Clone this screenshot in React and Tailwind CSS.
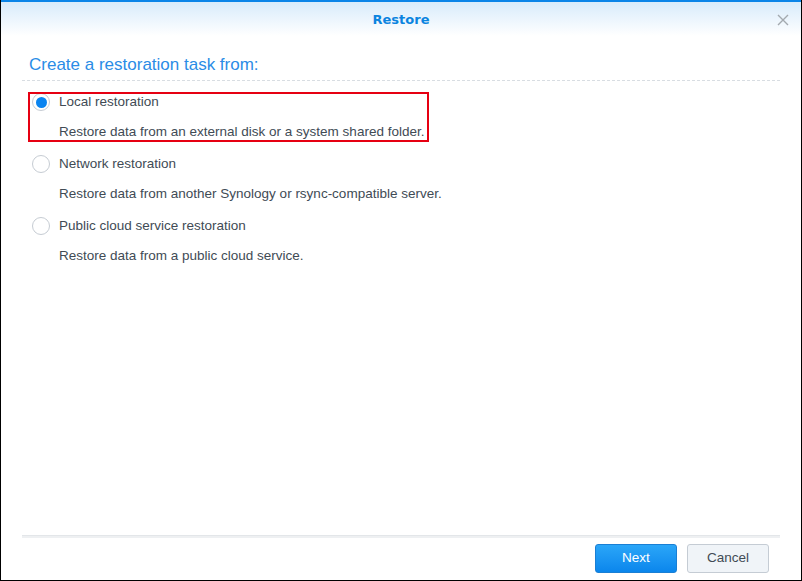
import React from "react";

function Radio({ checked }) {
  return (
    <span className="flex h-[18px] w-[18px] shrink-0 items-center justify-center rounded-full border border-[#c6ccd3] bg-white">
      {checked && <span className="h-[11px] w-[11px] rounded-full bg-[#0a84f0]" />}
    </span>
  );
}

function Option({ checked, label, desc, boxed }) {
  return (
    <div className={boxed ? "h-[50px] w-[401px] outline-2 -outline-offset-2 outline-[#e60012] outline" : "h-[50px]"}>
      <div className="flex h-[20px] items-center gap-[9px] pl-[4px]">
        <Radio checked={checked} />
        <span className="whitespace-nowrap">{label}</span>
      </div>
      <div className="mt-[10px] flex h-[20px] items-center whitespace-nowrap pl-[31px]">{desc}</div>
    </div>
  );
}

export default function App() {
  return (
    <div className="flex h-[581px] w-[802px] flex-col border-x border-b border-black bg-white text-[13.5px] text-[#414b55]" style={{ fontFamily: '"Liberation Sans", Arial, sans-serif' }}>
      <div className="h-[2px] bg-[#0a84e8]" />
      <div className="relative flex h-[34px] items-center justify-center bg-gradient-to-b from-[#d8ebfb] to-white pt-[2px]">
        <span className="text-[13px] font-bold text-[#0a84e0]" style={{ fontFamily: 'Tahoma, "DejaVu Sans", sans-serif' }}>Restore</span>
        <svg className="absolute right-[12px] top-[12px]" width="12" height="12" viewBox="0 0 12 12">
          <path d="M1 1L11 11M11 1L1 11" stroke="#a3a9af" strokeWidth="1.4" />
        </svg>
      </div>
      <div className="flex flex-1 flex-col px-[21px]">
        <div className="mt-[19px] pl-[7px] text-[17px] leading-[20px] text-[#2a8ce6]">Create a restoration task from:</div>
        <div className="mt-[5px] border-b border-dashed border-[#d8dde2]" />
        <div className="mt-[11px] flex flex-col gap-[12px] pl-[6px]">
          <Option checked boxed label="Local restoration" desc="Restore data from an external disk or a system shared folder." />
          <Option label="Network restoration" desc="Restore data from another Synology or rsync-compatible server." />
          <Option label="Public cloud service restoration" desc="Restore data from a public cloud service." />
        </div>
        <div className="flex-1" />
        <div className="h-[3px] border-t border-[#e3e6e9] bg-[#eef0f2]" />
        <div className="flex h-[42px] items-start justify-end gap-[10px] pr-[11px] pt-[6px]">
          <button className="h-[29px] w-[82px] rounded-[3px] border border-[#1a7fd4] bg-gradient-to-b from-[#2aa6f8] to-[#0a86ec] text-[13.5px] text-white">Next</button>
          <button className="h-[29px] w-[82px] rounded-[3px] border border-[#c5ccd4] bg-[#f0f4f8] text-[13.5px] text-[#414b55]">Cancel</button>
        </div>
      </div>
    </div>
  );
}
